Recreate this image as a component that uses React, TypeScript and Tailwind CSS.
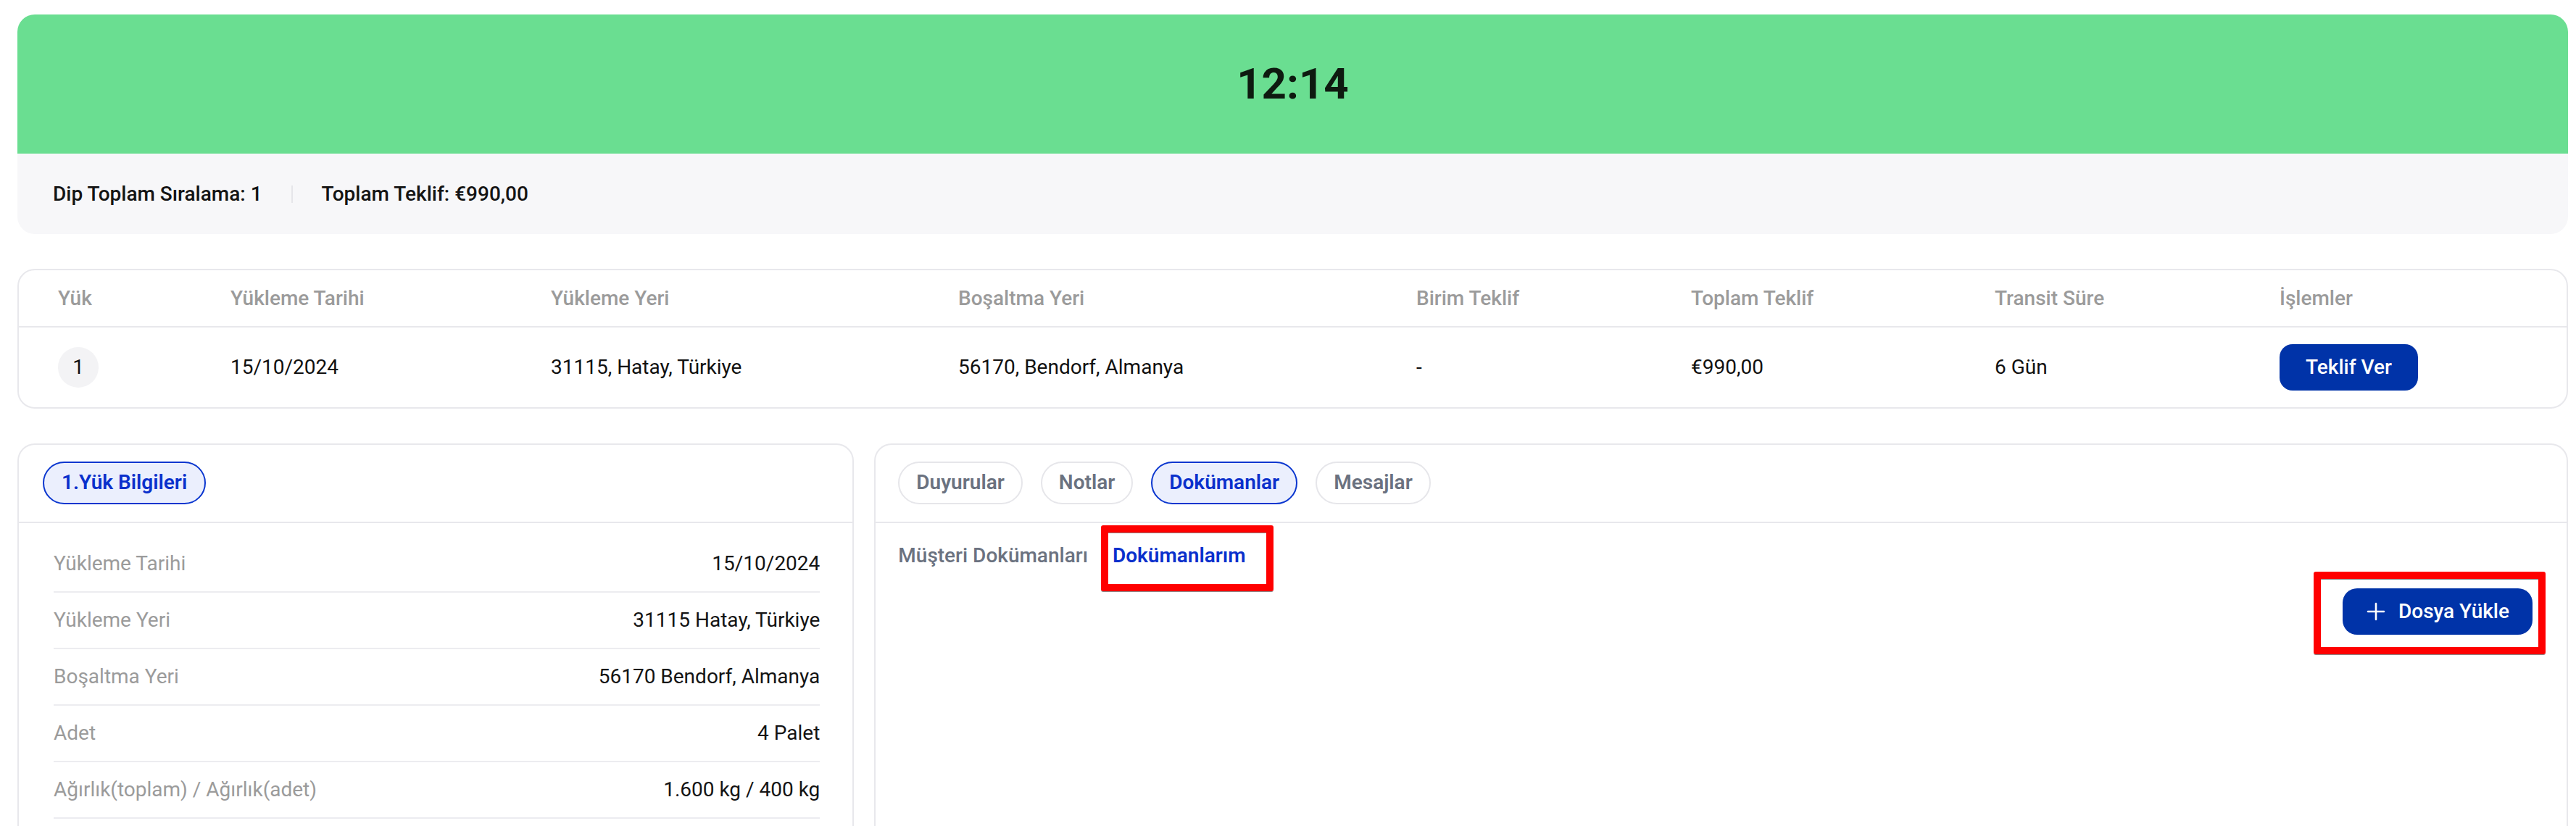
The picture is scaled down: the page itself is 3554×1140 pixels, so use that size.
import React from "react";

const cols = "grid grid-cols-[238px_442px_562px_632px_379px_419px_393px_1fr] pl-[54px]";

function RedBox({ className }: { className: string }) {
  return (
    <div
      className={`pointer-events-none absolute border-[10px] border-[#ff0000] rounded-[3px] shadow-[inset_0_1px_0_#8a8a8a,0_1px_0_#8a8a8a] ${className}`}
    />
  );
}

function InfoRow({ label, value }: { label: string; value: string }) {
  return (
    <div className="h-[78px] border-b-2 border-[#ececf0] flex items-center justify-between">
      <span className="text-[#9b9b9b]">{label}</span>
      <span className="text-[#141414]">{value}</span>
    </div>
  );
}

function Tab({ label, active }: { label: string; active?: boolean }) {
  return (
    <div
      className={
        active
          ? "h-[59px] px-[23px] rounded-full border-2 border-[#0a36cf] bg-[#ebeffd] text-[#0a30cc] font-semibold flex items-center"
          : "h-[59px] px-[23px] rounded-full border-2 border-[#e6e6ea] bg-white text-[#6b7280] font-semibold flex items-center"
      }
    >
      {label}
    </div>
  );
}

export default function App() {
  return (
    <div className="min-h-screen bg-white font-['Roboto',sans-serif] text-[28px] leading-[36px] pl-[24px] pr-[11px] pt-[20px] flex flex-col gap-[48px]">
      {/* Timer card */}
      <div className="rounded-[24px] overflow-hidden">
        <div className="h-[192px] bg-[#6ade91] flex items-center justify-center">
          <span className="text-[60px] leading-none font-bold text-[#0e1a10]">12:14</span>
        </div>
        <div className="h-[111px] bg-[#f7f7f9] flex items-center pl-[49px] font-medium text-[#141414]">
          <span>Dip Toplam Sıralama: 1</span>
          <span className="mx-[40px] h-[24px] w-[2px] bg-[#e6e6ea]" />
          <span>Toplam Teklif: €990,00</span>
        </div>
      </div>

      {/* Table card */}
      <div className="rounded-[24px] border-2 border-[#e8e8ec] bg-white">
        <div className={`${cols} h-[79px] items-center border-b-2 border-[#e8e8ec] text-[#9b9b9b] font-medium`}>
          <span>Yük</span>
          <span>Yükleme Tarihi</span>
          <span>Yükleme Yeri</span>
          <span>Boşaltma Yeri</span>
          <span>Birim Teklif</span>
          <span>Toplam Teklif</span>
          <span>Transit Süre</span>
          <span>İşlemler</span>
        </div>
        <div className={`${cols} h-[110px] items-center text-[#111]`}>
          <span className="w-[56px] h-[56px] rounded-full bg-[#f3f3f5] flex items-center justify-center">1</span>
          <span>15/10/2024</span>
          <span>31115, Hatay, Türkiye</span>
          <span>56170, Bendorf, Almanya</span>
          <span>-</span>
          <span>€990,00</span>
          <span>6 Gün</span>
          <span>
            <button className="w-[191px] h-[64px] rounded-[18px] bg-[#0033a8] text-white font-medium flex items-center justify-center">
              Teklif Ver
            </button>
          </span>
        </div>
      </div>

      {/* Bottom cards */}
      <div className="grid grid-cols-3 gap-[28px]">
        <div className="rounded-t-[24px] border-2 border-b-0 border-[#e8e8ec] min-h-[620px]">
          <div className="h-[108px] border-b-2 border-[#e8e8ec] flex items-center pl-[33px] pb-[2px]">
            <div className="h-[59px] px-[24px] rounded-full border-2 border-[#0a36cf] bg-[#ebeffd] text-[#0a30cc] font-semibold flex items-center">
              1.Yük Bilgileri
            </div>
          </div>
          <div className="pt-[18px] pl-[48px] pr-[45px]">
            <InfoRow label="Yükleme Tarihi" value="15/10/2024" />
            <InfoRow label="Yükleme Yeri" value="31115 Hatay, Türkiye" />
            <InfoRow label="Boşaltma Yeri" value="56170 Bendorf, Almanya" />
            <InfoRow label="Adet" value="4 Palet" />
            <InfoRow label="Ağırlık(toplam) / Ağırlık(adet)" value="1.600 kg / 400 kg" />
          </div>
        </div>

        <div className="col-span-2 rounded-t-[24px] border-2 border-b-0 border-[#e8e8ec] min-h-[620px]">
          <div className="h-[108px] border-b-2 border-[#e8e8ec] flex items-center gap-[25px] pl-[31px] pb-[2px]">
            <Tab label="Duyurular" />
            <Tab label="Notlar" />
            <Tab label="Dokümanlar" active />
            <Tab label="Mesajlar" />
          </div>
          <div className="pt-[27px] pl-[31px] pr-[47px] flex flex-col">
            <div className="flex items-center">
              <span className="text-[#6b7280] font-medium">Müşteri Dokümanları</span>
              <span className="relative ml-[34px] text-[#0a30cc] font-semibold">
                Dokümanlarım
                <RedBox className="left-[-16px] right-[-38px] top-[-24px] bottom-[-31px]" />
              </span>
            </div>
            <div className="flex justify-end mt-[27px]">
              <div className="relative">
                <button className="h-[64px] rounded-[20px] bg-[#0033a8] text-white font-medium flex items-center pl-[33px] pr-[32px] gap-[18px]">
                  <svg width="26" height="26" viewBox="0 0 26 26" fill="none" stroke="white" strokeWidth="2.6" strokeLinecap="round">
                    <path d="M13 2v22M2 13h22" />
                  </svg>
                  Dosya Yükle
                </button>
                <RedBox className="left-[-40px] right-[-18px] top-[-23px] bottom-[-27px]" />
              </div>
            </div>
          </div>
        </div>
      </div>
    </div>
  );
}
